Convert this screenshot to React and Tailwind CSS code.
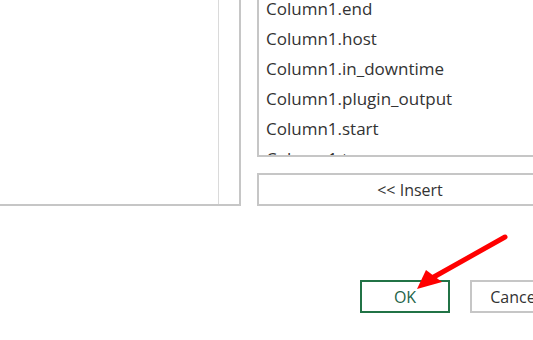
export default function App() {
  const items = [
    "Column1.end",
    "Column1.host",
    "Column1.in_downtime",
    "Column1.plugin_output",
    "Column1.start",
    "Column1.type",
  ];
  return (
    <div
      className="relative w-[533px] h-[340px] overflow-hidden bg-white text-[#333333]"
      style={{ fontFamily: '"Open Sans", "Noto Sans", sans-serif' }}
    >
      <div className="flex h-[206px]">
        <div className="flex w-[241px] shrink-0 border-r-2 border-b-2 border-[#c6c6c6]">
          <div className="w-[219px] border-r border-[#dadada]" />
          <div className="flex-1" />
        </div>
        <div className="ml-[16px] flex w-[306px] shrink-0 flex-col">
          <div className="h-[157px] overflow-hidden border-l-2 border-b-2 border-[#c6c6c6] pl-[7px]">
            <div className="-mt-[6px]">
              {items.map((t) => (
                <div key={t} className="h-[30px] text-[17px] leading-[30px] whitespace-nowrap">
                  {t}
                </div>
              ))}
            </div>
          </div>
          <div className="mt-[16px] flex h-[33px] items-center justify-center border-2 border-[#c6c6c6] text-[16px]">
            &lt;&lt; Insert
          </div>
        </div>
      </div>
      <div className="mt-[74px] flex h-[33px] pl-[360px]">
        <div className="flex w-[90px] shrink-0 items-center justify-center border-2 border-[#217346] text-[16px] text-[#236448]">
          OK
        </div>
        <div className="ml-[20px] flex w-[90px] shrink-0 items-center justify-center border-2 border-[#c6c6c6] text-[16px]">
          Cancel
        </div>
      </div>
      <svg className="absolute left-0 top-0" width="533" height="340" viewBox="0 0 533 340">
        <line x1="505" y1="237" x2="432" y2="278" stroke="#ff0000" strokeWidth="5" strokeLinecap="round" />
        <polygon points="417,289 426,270 442,282" fill="#ff0000" />
      </svg>
    </div>
  );
}
